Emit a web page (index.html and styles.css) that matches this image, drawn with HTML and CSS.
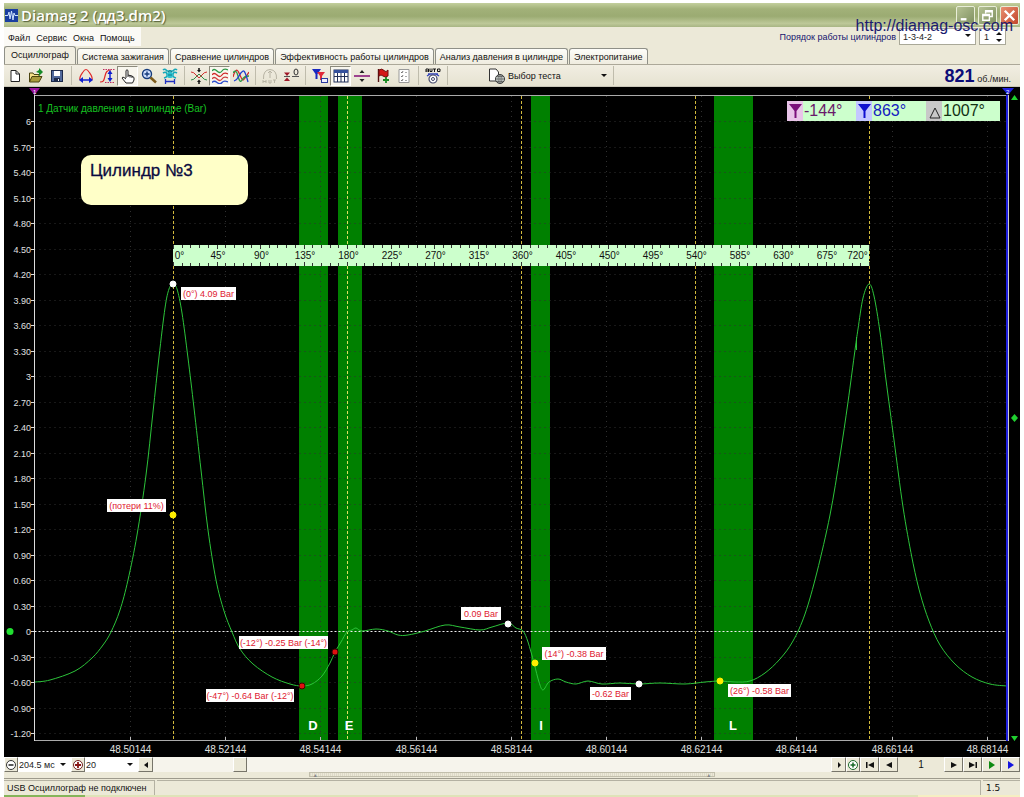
FILE: index.html
```html
<!DOCTYPE html>
<html lang="ru">
<head>
<meta charset="utf-8">
<title>Diamag 2</title>
<link rel="stylesheet" href="styles.css">
</head>
<body>
<div class="window">
  <header class="titlebar">
    <svg class="logo" viewBox="0 0 13 13"><rect width="13" height="13" fill="#1a3ea0"/><path d="M0 6.500H3L4 3L5 10L6.500 2L8 11L9 4L10 6.500H13" fill="none" stroke="#cfe4ff"/></svg>
    <h1 class="title">Diamag 2 (дд3.dm2)</h1>
    <div class="winbtns">
      <button class="winbtn" aria-label="Свернуть"><svg viewBox="0 0 18 18"><path d="M4 13H10" stroke="#fff" stroke-width="2.500"/></svg></button>
      <button class="winbtn" aria-label="Развернуть"><svg viewBox="0 0 18 18"><path d="M7 7V4H14V10H11M7 5H14M4 8H11V14H4ZM4 9H11" fill="none" stroke="#fff" stroke-width="1.500"/></svg></button>
      <button class="winbtn close" aria-label="Закрыть"><svg viewBox="0 0 18 18"><path d="M4 4L14 14M14 4L4 14" stroke="#fff" stroke-width="2.500"/></svg></button>
    </div>
    <a class="site" href="#">http://diamag-osc.com</a>
  </header>

  <div class="menurow">
    <nav class="menu">
      <button>Файл</button><button>Сервис</button><button>Окна</button><button>Помощь</button>
    </nav>
    <div class="order">
      <label for="order">Порядок работы цилиндров</label>
      <span class="combo"><select id="order"><option>1-3-4-2</option></select></span>
      <span class="spin"><input id="cyl" type="text" value="1" aria-label="Цилиндр"></span>
    </div>
  </div>

  <nav class="tabs">
    <button class="tab active">Осциллограф</button>
    <button class="tab">Система зажигания</button>
    <button class="tab">Сравнение цилиндров</button>
    <button class="tab">Эффективность работы цилиндров</button>
    <button class="tab">Анализ давления в цилиндре</button>
    <button class="tab">Электропитание</button>
  </nav>

  <div class="toolbar">
    <button class="tool" aria-label="Новый"><svg viewBox="0 0 16 16"><path d="M4 2.500H9L12.500 6V13.500H4Z" fill="#fff" stroke="#222"/><path d="M9 2.500V6H12.500" fill="none" stroke="#222"/></svg></button>
    <button class="tool" aria-label="Открыть"><svg viewBox="0 0 16 16"><path d="M1.500 14V5H5L6 6.500H11V9" fill="#f5e08a" stroke="#4c4410"/><path d="M1.500 14L4 8.500H14L11 14Z" fill="#a89a3c" stroke="#4c4410"/><path d="M8 4L11 2V0L15 4L11 8V5Z" fill="#168a28"/></svg></button>
    <button class="tool" aria-label="Сохранить"><svg viewBox="0 0 16 16"><rect x="2.500" y="2.500" width="11" height="11" fill="#526a9c" stroke="#1d2a4a"/><rect x="5" y="3" width="6" height="5" fill="#fff"/><rect x="5" y="10" width="6" height="3.500" fill="#1d2a4a"/><rect x="9" y="11" width="1" height="2" fill="#fff"/></svg></button>
    <i class="sep"></i>
    <button class="tool" aria-label="Ширина импульса"><svg viewBox="0 0 16 16"><path d="M2 12C1 9 3 7 5 4Q8 -1 11 4C13 7 15 9 14 12" fill="none" stroke="#e02828" stroke-width="1.200"/><path d="M4 12H12" stroke="#1020d0" stroke-width="1.500"/><path d="M1 12L5 9V15ZM15 12L11 9V15Z" fill="#1020d0"/></svg></button>
    <button class="tool" aria-label="Амплитуда"><svg viewBox="0 0 16 16"><path d="M1 14C5 14 5 12 6 8S8 2 12 2" fill="none" stroke="#e02828" stroke-width="1.200"/><path d="M4 1.500H16M6 14.500H16" stroke="#c03060" stroke-dasharray="1.500 1"/><path d="M11 4V12" stroke="#1020d0" stroke-width="1.500"/><path d="M11 2L8.500 6H13.500ZM11 14L8.500 10H13.500Z" fill="#1020d0"/></svg></button>
    <button class="tool pressed" aria-label="Рука"><svg viewBox="0 0 16 16"><path d="M6 10V2.500Q7 1 8 2.500V7L12 8L14 9.500V12L12.500 15H6L2 10Q2.500 8.500 4 9.500L6 11M8 7V9M10 7.500V9.500M12 8V10" fill="#fff" stroke="#222"/></svg></button>
    <button class="tool" aria-label="Увеличить"><svg viewBox="0 0 16 16"><circle cx="6" cy="6" r="4.500" fill="#cfe0ff" stroke="#153b7c" stroke-width="1.400"/><path d="M6 3.500V8.500M3.500 6H8.500" stroke="#153b7c" stroke-width="1.400"/><path d="M9.500 9.500L15 14.500" stroke="#7c5a1a" stroke-width="2.500"/></svg></button>
    <button class="tool" aria-label="Автомасштаб"><svg viewBox="0 0 16 16"><path d="M1 2Q3 0 5 3H11Q13 0 15 2M1 5Q4 3 5 6T2 10M15 5Q12 3 11 6T14 10" fill="none" stroke="#18a8b8" stroke-width="1.600"/><rect x="5" y="4" width="6" height="6" rx="2" fill="#2cc0d0"/><path d="M6 4Q8 1 10 4M6 7H10" fill="none" stroke="#0d7a88"/><path d="M3.500 11V16M12.500 11V16M4 13.500H12" stroke="#2030c0" stroke-width="1.300"/></svg></button>
    <i class="sep"></i>
    <button class="tool" aria-label="Центр"><svg viewBox="0 0 16 16"><path d="M8 0V3M8 13V16" stroke="#111" stroke-width="1.500"/><path d="M8 4.500L6 2H10ZM8 11.500L6 14H10Z" fill="#111"/><path d="M0 4Q3 4 5 7L8 10L11 7Q13 4 16 4" fill="none" stroke="#d03030"/><path d="M0 12Q3 12 5 9L8 6L11 9Q13 12 16 12" fill="none" stroke="#2c8a48"/></svg></button>
    <button class="tool pressed" aria-label="Раздельно"><svg viewBox="0 0 16 16"><path d="M0 3Q2 0 5 3T10 3T16 2" fill="none" stroke="#2c9a48" stroke-width="1.300"/><path d="M0 7Q2 4 5 7T10 7T16 6" fill="none" stroke="#d02828" stroke-width="1.300"/><path d="M0 11Q2 8 5 11T10 11T16 10" fill="none" stroke="#d04040" stroke-width="1.300"/><path d="M0 14.500Q2 12 5 14.500T10 14.500T16 14" fill="none" stroke="#3050d0" stroke-width="1.300"/></svg></button>
    <button class="tool" aria-label="Наложить"><svg viewBox="0 0 16 16"><path d="M0 9Q3 -2 6 5T10 12T16 4" fill="none" stroke="#d02828" stroke-width="1.300"/><path d="M0 5Q3 0 5 8T9 12T16 8" fill="none" stroke="#2c9a48" stroke-width="1.300"/><path d="M1 13Q4 12 6 8T10 3T15 14" fill="none" stroke="#2040d0" stroke-width="1.300"/></svg></button>
    <i class="sep"></i>
    <button class="tool" aria-label="Авто"><svg viewBox="0 0 16 16"><path d="M1.500 11Q1 2 8 1.500Q15 2 14.500 11M8 3V10M6 5L8 3L10 5M1 12V15M4 12V15M1 13.500H4M7 12V15H9V12M11 12H14M12.500 12V15" fill="none" stroke="#b8b4a4"/></svg></button>
    <button class="tool" aria-label="Ноль"><svg viewBox="0 0 16 16"><path d="M1 8.500H7M9 8.500H16" stroke="#555" stroke-width="1.200"/><path d="M4 8L1 4.500H7ZM4 9.500L1 13H7Z" fill="#a01828"/><ellipse cx="13" cy="4" rx="2" ry="3" fill="none" stroke="#333"/></svg></button>
    <i class="sep"></i>
    <button class="tool" aria-label="Маркеры"><svg viewBox="0 0 16 16"><path d="M0 1H9L5.500 6V11H3.500V6Z" fill="#1828c0"/><path d="M5 4H13L10 8V12H8V8Z" fill="#e02838"/><rect x="9.500" y="10.500" width="6" height="4" fill="#eef" stroke="#2838a0"/></svg></button>
    <button class="tool pressed" aria-label="Таблица"><svg viewBox="0 0 16 16"><rect x="1" y="2" width="14" height="12" fill="#fff" stroke="#223058"/><rect x="1" y="2" width="14" height="3" fill="#34509c"/><path d="M4.500 5V14M8 5V14M11.500 5V14M1 8.500H15" stroke="#223058"/></svg></button>
    <button class="tool" aria-label="Разделить"><svg viewBox="0 0 16 16"><path d="M0 8H16" stroke="#8a187c" stroke-width="1.600"/><path d="M8 2L5.500 5H10.500ZM8 14L5.500 11H10.500Z" fill="#222"/></svg></button>
    <button class="tool" aria-label="Добавить флаг"><svg viewBox="0 0 16 16"><path d="M3.500 1V14" stroke="#541010" stroke-width="1.400"/><path d="M4 2Q7 0 9 2.500T13 2V8Q10 10 8 8T4 8Z" fill="#d41818" stroke="#701010"/><path d="M11 9V15M8 12H14" stroke="#158a20" stroke-width="1.800"/></svg></button>
    <button class="tool" aria-label="Отчёт"><svg viewBox="0 0 16 16"><path d="M3 1.500H13V14.500H3Z" fill="#fff" stroke="#999"/><path d="M5 4L6 5L7 3M5 8L6 9L7 7M5 12L6 13L7 11" fill="none" stroke="#777"/><path d="M9 4.500H11M9 8.500H11M9 12.500H11" stroke="#aaa"/></svg></button>
    <i class="sep"></i>
    <button class="tool" aria-label="AUTO"><svg viewBox="0 0 16 16"><path d="M1 4V1H3.500V4M1 3H3.500M5 0.500V3.500H7V0.500M8 1H11M9.500 1V4M12.500 1H15V3.500H12.500Z" fill="none" stroke="#111"/><path d="M3 6H13M2 8L5 6M14 8L11 6" stroke="#3344bb" stroke-width="1.500"/><circle cx="8" cy="11" r="4" fill="#fff" stroke="#44486a" stroke-width="1.200"/><circle cx="8" cy="11" r="1.500" fill="none" stroke="#44486a"/></svg></button>
    <i class="sep"></i>
    <button class="testpick">
      <svg viewBox="0 0 18 16"><path d="M1.500 1H8L10.500 4V13H1.500Z" fill="#fff" stroke="#333"/><circle cx="12" cy="11" r="4.500" fill="#d4dcd8" stroke="#333"/><path d="M7.500 11H16.500M12 6.500V15.500M9 8.500H15M9 13.500H15" stroke="#555" stroke-width="0.700"/><ellipse cx="12" cy="11" rx="2" ry="4.500" fill="none" stroke="#555" stroke-width="0.700"/></svg>
      <span>Выбор теста</span><i class="caret"></i>
    </button>
    <i class="sep"></i>
    <output class="rpm"><b>821</b> об./мин.</output>
  </div>

  <main class="scope">
    <svg id="chart" class="chart" viewBox="4 87 1016 670" role="img" aria-label="Датчик давления в цилиндре"></svg>
  </main>

  <div class="controls">
    <button class="ctl small" aria-label="Уменьшить масштаб"><svg viewBox="0 0 12 12"><circle cx="6" cy="6" r="4.500" fill="#fff" stroke="#333"/><path d="M3.500 6H8.500" stroke="#222" stroke-width="1.500"/></svg></button>
    <span class="combo flat"><select aria-label="Развёртка"><option>204.5 мс</option></select></span>
    <button class="ctl small" aria-label="Увеличить масштаб"><svg viewBox="0 0 12 12"><circle cx="6" cy="6" r="4.500" fill="#fff" stroke="#702020"/><path d="M3 6H9M6 3V9" stroke="#8a1818" stroke-width="1.800"/></svg></button>
    <span class="combo flat"><select aria-label="Скорость"><option>20</option></select></span>
    <button class="ctl" aria-label="Влево"><svg viewBox="0 0 12 12"><path d="M8 3V9L4 6Z"/></svg></button>
    <input class="scroll" type="range" min="0" max="100" value="12" aria-label="Прокрутка">
    <button class="ctl" aria-label="Вправо"><svg viewBox="0 0 12 12"><path d="M5 3V9L8 6Z"/></svg></button>
    <button class="ctl small" aria-label="Добавить"><svg viewBox="0 0 12 12"><circle cx="6" cy="6" r="4.500" fill="#fff" stroke="#186a28"/><path d="M3.500 6H8.500M6 3.500V8.500" stroke="#186a28" stroke-width="1.500"/></svg></button>
    <button class="ctl wide" aria-label="В начало"><svg viewBox="0 0 12 12"><path d="M2 3H3.500V9H2ZM10 3V9L4 6Z"/></svg></button>
    <button class="ctl wide" aria-label="Назад"><svg viewBox="0 0 12 12"><path d="M9 3V9L3 6Z"/></svg></button>
    <output class="page">1</output>
    <button class="ctl wide" aria-label="Вперёд"><svg viewBox="0 0 12 12"><path d="M3 3V9L9 6Z"/></svg></button>
    <button class="ctl wide" aria-label="В конец"><svg viewBox="0 0 12 12"><path d="M10 3H8.500V9H10ZM2 3V9L8 6Z"/></svg></button>
    <button class="ctl wide green" aria-label="Пуск"><svg viewBox="0 0 12 12"><path d="M3 2V10L9 6Z"/></svg></button>
    <button class="ctl wide blue" aria-label="Воспроизвести"><svg viewBox="0 0 12 12"><path d="M3 2V10L9 6Z"/></svg></button>
  </div>
  <div class="splitter"><span class="grip"><i>▴</i><i>▴</i></span></div>

  <footer class="status">
    <span class="cell first">USB Осциллограф не подключен</span>
    <span class="cell grow"></span>
    <span class="cell ver">1.5</span>
  </footer>
</div>
<div class="edge"></div>
<script src="chart.js"></script>
</body>
</html>
```
FILE: styles.css
```css
* { box-sizing: border-box; }
body {
  margin: 0;
  min-height: 100vh;
  background: #fff;
  font: 9px/12px "Liberation Sans", Arial, sans-serif;
  color: #111;
}
button, select, input { font: inherit; color: inherit; border-radius: 0; }
button { padding: 0; border: 0; background: none; white-space: nowrap; }
.window { margin: 3px 4px 0; background: #ece9d8; }

.titlebar {
  position: relative;
  display: flex;
  align-items: center;
  gap: 3px;
  height: 24px;
  padding: 0 1px;
  background: linear-gradient(#c3cf9d, #a2b179 25%, #9bab72 55%, #bdc898 85%, #a8b584);
}
.logo { width: 13px; height: 13px; }
.title {
  flex: 1;
  margin: 0;
  font: 600 15px/22px "Open Sans", sans-serif;
  color: #fff;
  text-shadow: 1px 1px 1px #56613a;
}
.winbtns { display: flex; gap: 3px; }
.winbtn {
  width: 19px;
  height: 19px;
  border: 1px solid #e8edd8;
  border-radius: 2px;
  background: linear-gradient(135deg, #b4c193, #7f9060);
}
.winbtn svg { display: block; width: 17px; height: 17px; }
.winbtn.close { background: linear-gradient(135deg, #e89070, #c2452c); }
.site {
  position: absolute;
  right: 7px;
  top: 13px;
  z-index: 2;
  font-size: 16px;
  line-height: 20px;
  color: #1b1b70;
  text-decoration: none;
}

.menurow { display: flex; justify-content: space-between; height: 19px; }
.menu { display: flex; gap: 6px; padding: 2px 6px 0 4px; background: #fbfaf6; }
.order { display: flex; align-items: center; gap: 3px; padding-right: 14px; color: #14146e; }
.combo { position: relative; display: flex; }
.combo select {
  appearance: none;
  width: 77px;
  height: 17px;
  padding: 0 3px;
  border: 1px solid #a9a898;
  background: #fff;
  color: #222;
}
.combo::after, .caret {
  content: "";
  border: 3px solid transparent;
  border-top-color: #111;
  border-bottom: 0;
}
.combo::after { position: absolute; right: 5px; top: 6px; }
.spin { position: relative; display: flex; }
.spin input { width: 27px; height: 17px; padding: 0 4px; border: 1px solid #a9a898; background: #fff; color: #222; }
.spin::before, .spin::after { content: ""; position: absolute; right: 4px; border: 3px solid transparent; }
.spin::before { top: 4px; border-bottom-color: #111; border-top: 0; }
.spin::after { bottom: 3px; border-top-color: #111; border-bottom: 0; }

.tabs { display: flex; align-items: flex-end; gap: 1px; height: 18px; }
.tab {
  height: 16px;
  padding: 0 4px;
  border: 1px solid #8f9088;
  border-bottom: 0;
  border-radius: 3px 3px 0 0;
  background: linear-gradient(#fdfdf9, #efecdf);
}
.tab.active { height: 18px; padding: 0 6px 2px; background: #f1eee1; }

.toolbar {
  display: flex;
  align-items: center;
  height: 23px;
  border-top: 1px solid #aca899;
  border-bottom: 1px solid #c9c6b8;
  background: linear-gradient(#f1eee2, #e6e2d1);
}
.tool { width: 21px; height: 20px; border: 1px solid transparent; }
.tool svg { display: block; width: 16px; height: 16px; margin: 0 auto; }
.tool.pressed { border-color: #8c8a7c #fff #fff #8c8a7c; background: #f8f6ee; }
.sep { width: 1px; height: 19px; margin: 0 3px 0 4px; background: #bfbcac; }
.testpick { display: flex; align-items: center; margin-left: 37px; height: 20px; }
.testpick svg { width: 18px; height: 16px; margin-right: 2px; }
.caret { margin: 0 2px 0 40px; }
.rpm { margin-left: auto; padding-right: 9px; color: #222; white-space: nowrap; }
.rpm b { font-size: 18px; line-height: 20px; color: #0c0c78; }

.scope { background: #000; }
.chart { display: block; width: 100%; }
.chart text { font-family: "Liberation Sans", Arial, sans-serif; }
.axis text { font-size: 9px; fill: #e0e0e0; }
.axis .time { font-size: 10px; text-anchor: middle; }
.axis .level { font-size: 9px; text-anchor: end; }
.ruler text { font-size: 10px; fill: #111; text-anchor: middle; }
.callout { font-size: 9px; fill: #e01830; text-anchor: middle; }
.letter { font-size: 13px; font-weight: bold; fill: #fff; text-anchor: middle; }
.sensor { font-size: 10px; fill: #16c020; }
.note { font-size: 17px; fill: #0a0a40; stroke: #0a0a40; stroke-width: 0.3px; }
.angle { font-size: 16px; }

.controls { display: flex; align-items: stretch; height: 15px; }
.ctl {
  width: 15px;
  border: 1px solid #fff;
  border-right-color: #77756a;
  border-bottom-color: #77756a;
  background: #ece9d8;
}
.ctl svg { display: block; width: 12px; height: 12px; margin: 0 auto; fill: #111; }
.ctl.small { width: 14px; }
.ctl.wide { width: 19px; }
.ctl.green svg { fill: #0d8a12; }
.ctl.blue svg { fill: #1414e0; }
.combo.flat select { width: 53px; height: 15px; padding: 0 1px; border: 0; }
.scroll { appearance: none; flex: 1; min-width: 0; margin: 0; background: #f6f4ec; }
.scroll::-webkit-slider-thumb {
  appearance: none;
  width: 14px;
  height: 15px;
  border: 1px solid #fff;
  border-right-color: #77756a;
  border-bottom-color: #77756a;
  background: #ece9d8;
}
.page { width: 46px; font-size: 10px; line-height: 16px; text-align: center; }

.splitter { display: flex; justify-content: center; height: 7px; border-bottom: 1px solid #9d9a8c; }
.grip {
  display: flex;
  justify-content: space-between;
  width: 40%;
  height: 5px;
  padding: 0 4px;
  border: 1px solid #c2bfac;
  background: repeating-linear-gradient(90deg, #dedac8 0 1px, #ece9d8 1px 2px);
}
.grip i { font: 6px/4px "DejaVu Sans", sans-serif; color: #888; }

.status { display: flex; gap: 2px; height: 16px; padding-top: 1px; }
.cell { padding: 0 3px; line-height: 14px; border-top: 1px solid #b4b1a2; border-right: 1px solid #b4b1a2; }
.first { width: 151px; }
.grow { flex: 1; }
.ver { width: 37px; font-family: "DejaVu Sans", sans-serif; border-right: 0; }
.edge { height: 2px; margin: 0 4px; background: linear-gradient(90deg, #86b45a 0 8%, #dfe3b8 8% 90%, #f6efc2 90%); }
```
FILE: chart.js
```js
(function () {
  const NS = "http://www.w3.org/2000/svg";
  const chart = document.getElementById("chart");

  function add(parent, tag, attrs, text) {
    const el = document.createElementNS(NS, tag);
    for (const key in attrs) el.setAttribute(key, attrs[key]);
    if (text !== undefined) el.textContent = text;
    parent.appendChild(el);
    return el;
  }
  function line(parent, x1, y1, x2, y2, stroke, dash) {
    const a = { x1, y1, x2, y2, stroke };
    if (dash) a["stroke-dasharray"] = dash;
    return add(parent, "line", a);
  }

  const left = 34.5, right = 1008, top = 96, bottom = 740;
  const zeroY = 631.5, perBar = 85;
  const degX = d => 173.5 + d * 696 / 720;

  add(chart, "rect", { x: 4, y: 87, width: 1016, height: 670, fill: "#000" });

  // Valve phase bands
  [[299, 29], [338, 24], [531, 19], [714, 39]].forEach(([x, width]) =>
    add(chart, "rect", { x, y: top, width, height: bottom - top, fill: "#008000" }));

  // Axes, grid and scale labels
  const axis = add(chart, "g", { class: "axis" });
  for (let i = -4; i <= 20; i++) {
    const value = i * 0.3, y = Math.floor(zeroY - value * perBar) + 0.5;
    if (i !== 0) line(axis, left, y, right, y, "#303030", "1 4");
    line(axis, 31, y, left, y, "#ddd");
    const label = i % 10 === 0 ? String(Math.round(value)) : value.toFixed(2);
    add(axis, "text", { x: 31, y: y + 3, class: "level" }, label);
  }
  for (let i = 0; i < 10; i++) {
    const x = Math.round(130 + i * 95.2) + 0.5;
    line(axis, x, top, x, bottom, "#303030", "1 4");
    line(axis, x, bottom - 3, x, bottom, "#bbb");
    add(axis, "text", { x, y: 753, class: "time" }, (48.50144 + i * 0.02).toFixed(5));
  }
  line(axis, left, 95.5, right, 95.5, "#aaa");
  line(axis, left, 740.5, right, 740.5, "#aaa");
  line(axis, left, 95, left, 741, "#ddd");
  line(axis, left, zeroY, right, zeroY, "#eee", "2 2");
  for (let d = 0; d <= 720; d += 180) {
    line(axis, degX(d), top, degX(d), bottom, d === 180 ? "#e0e060" : "#d0b83c", "3 2");
  }

  // Pressure trace
  const points = [
    [35,682],[50,680],[75,671],[92,658],[103,645],[111,632],[120,610],[128,580],[137,535],[146,475],
    [153,412],[159,357],[165,308],[169,289],[173,284],[177,289],[182,313],[188,358],[194,408],[201,470],
    [208,530],[216,580],[224,611],[232,632],[240,649],[253,664],[272,677],[290,684],[302,686],[312,684],
    [322,676],[330,663],[335,652],[341,642],[347,632],[352,630],[356,628],[362,631],[376,629],[388,631],
    [398,635],[408,635],[425,631],[445,625],[460,627],[480,630],[492,627],[508,623],[516,628],[523,631],
    [528,642],[534,663],[539,682],[543,690],[549,682],[558,679],[566,682],[576,684],[588,681],[602,684],
    [620,683],[639,684],[660,683],[685,684],[705,682],[720,681],[735,682],[750,681],[765,673],[780,659],
    [793,641],[805,614],[817,572],[830,515],[840,456],[848,402],[855,350],[858,329],[863,298],[869,284],
    [874,296],[880,332],[886,380],[894,440],[903,507],[912,558],[920,593],[929,621],[940,645],[955,664],
    [972,677],[990,684],[1007,686]
  ];
  let d = `M${points[0]}`;
  for (let i = 0; i < points.length - 1; i++) {
    const a = points[i - 1] || points[i], b = points[i], c = points[i + 1], e = points[i + 2] || c;
    d += `C${b[0] + (c[0] - a[0]) / 6},${b[1] + (c[1] - a[1]) / 6} ` +
         `${c[0] - (e[0] - b[0]) / 6},${c[1] - (e[1] - b[1]) / 6} ${c}`;
  }
  add(chart, "path", { d, fill: "none", stroke: "#2cc43a" });
  add(chart, "path", { d: "M856.5 337V350", stroke: "#2cc43a" });

  // Crank angle ruler
  const ruler = add(chart, "g", { class: "ruler" });
  add(ruler, "rect", { x: 173, y: 245, width: 696, height: 21, fill: "#ccffcc" });
  for (let deg = 0; deg <= 720; deg += 9) {
    const len = deg % 45 === 0 ? 4 : 3, x = Math.floor(degX(deg)) + 0.5;
    line(ruler, x, 245, x, 245 + len, "#333");
    line(ruler, x, 266 - len, x, 266, "#333");
  }
  for (let deg = 0; deg <= 720; deg += 45) {
    const shift = deg === 0 ? 6 : deg === 720 ? -12 : 1;
    add(ruler, "text", { x: degX(deg) + shift, y: 259 }, deg + "°");
  }

  // Measurement callouts
  [
    [181, 287, 55, "(0°) 4.09 Bar"],
    [107, 499, 59, "(потери 11%)"],
    [239, 636, 89, "(-12°) -0.25 Bar (-14°)"],
    [206, 689, 88, "(-47°) -0.64 Bar (-12°)"],
    [461, 607, 40, "0.09 Bar"],
    [542, 647, 64, "(14°) -0.38 Bar"],
    [590, 687, 41, "-0.62 Bar"],
    [728, 684, 63, "(26°) -0.58 Bar"]
  ].forEach(([x, y, width, text]) => {
    add(chart, "rect", { x, y, width, height: 13, fill: "#fff" });
    add(chart, "text", { x: x + width / 2, y: y + 10, class: "callout" }, text);
  });
  [
    [173, 284, "#fff"], [508, 624, "#fff"], [639, 684, "#fff"],
    [173, 515, "#ffee00"], [535, 663, "#ffee00"], [720, 681, "#ffee00"],
    [302, 686, "#e01010"], [335, 652, "#e01010"]
  ].forEach(([cx, cy, fill]) =>
    add(chart, "circle", { cx, cy, r: 3, fill, stroke: fill === "#e01010" ? "#400" : fill }));
  [[313, "D"], [349, "E"], [541, "I"], [733, "L"]].forEach(([x, t]) =>
    add(chart, "text", { x, y: 730, class: "letter" }, t));

  add(chart, "text", { x: 38, y: 112, class: "sensor" }, "1 Датчик давления в цилиндре (Bar)");
  add(chart, "rect", { x: 81, y: 155, width: 167, height: 50, rx: 10, fill: "#ffffc8" });
  add(chart, "text", { x: 90, y: 176, class: "note" }, "Цилиндр №3");

  // Angle readout
  add(chart, "rect", { x: 787, y: 101, width: 213, height: 20, fill: "#ccffcc" });
  [
    [787, "#e8c4e8", "#7a107a", "-144°", "#6a1a6a", true],
    [856, "#c4c8ff", "#1010d0", "863°", "#1420c0", true],
    [926, "#c8c8c8", "#222", "1007°", "#123012", false]
  ].forEach(([x, bg, ink, text, color, flag]) => {
    add(chart, "rect", { x, y: 101, width: 16, height: 20, fill: bg });
    if (flag) add(chart, "path", { d: `M${x + 2} 104H${x + 15}L${x + 9.5} 111V118H${x + 7.5}V111Z`, fill: ink });
    else add(chart, "path", { d: `M${x + 9} 108L${x + 14} 118H${x + 4}Z`, fill: "none", stroke: ink });
    add(chart, "text", { x: x + 17, y: 116, class: "angle", fill: color }, text);
  });

  // Cursor handles
  line(chart, 34.5, 88, 34.5, 95, "#c8c");
  add(chart, "path", { d: "M29 88H40L34.5 95Z", fill: "#98109c" });
  add(chart, "text", { x: 33, y: 94, fill: "#fff", "font-size": 6 }, "1");
  add(chart, "rect", { x: 1006, y: 95, width: 2, height: 646, fill: "#2020e0" });
  line(chart, 1008.5, 95, 1008.5, 741, "#ccc");
  add(chart, "path", { d: "M1002 88H1014L1008 95Z", fill: "#2020e0" });
  add(chart, "text", { x: 1006, y: 94, fill: "#fff", "font-size": 6 }, "2");
  add(chart, "path", { d: "M1011 100L1014.5 95L1018 100ZM1011 736H1018L1014.5 741ZM1014.5 414L1018 418L1014.5 422L1011 418Z", fill: "#20d030" });
  add(chart, "circle", { cx: 10, cy: 631.5, r: 3.5, fill: "#20e030" });
})();
```
